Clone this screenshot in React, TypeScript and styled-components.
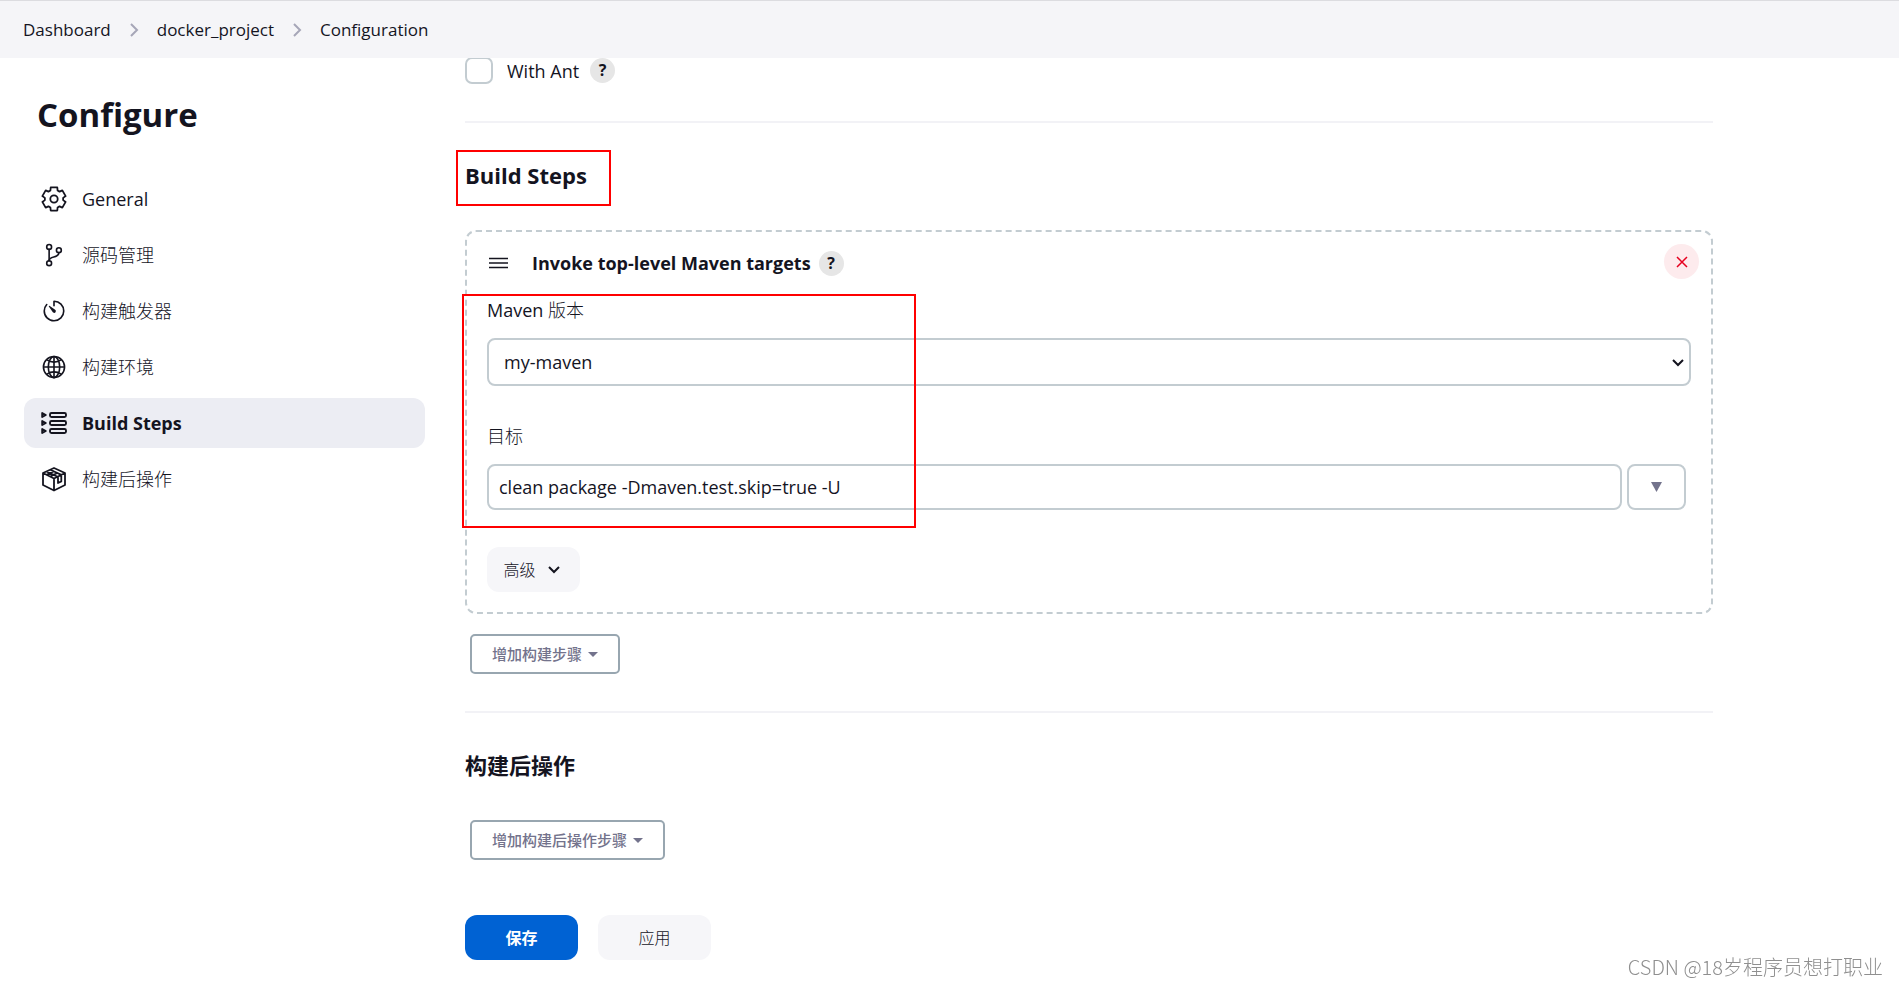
import React from "react";
import styled, { createGlobalStyle, css } from "styled-components";
import { IoGitBranchOutline, IoGlobeOutline, IoTimerOutline } from "react-icons/io5";

const ink = "#14141f";
const line = "#c3ccd1";

const GlobalStyle = createGlobalStyle`
  * { box-sizing: border-box; }
  body {
    margin: 0;
    background: #fff;
    color: ${ink};
    font-family: "Open Sans", "Noto Sans CJK SC", sans-serif;
    font-size: 18px;
    line-height: 24px;
  }
  button, input, select { font: inherit; color: inherit; margin: 0; }
  h1, h2, h3, ul, ol, p { margin: 0; padding: 0; }
  ul, ol { list-style: none; }
  a { color: inherit; text-decoration: none; }
`;

const Header = styled.header`
  position: sticky;
  top: 0;
  z-index: 2;
  height: 58px;
  padding: 0 23px;
  display: flex;
  align-items: center;
  background: #f5f5f8;
  border-top: 1px solid #dcdce0;
`;

const Crumbs = styled.ol`
  display: flex;
  align-items: center;
  gap: 19px;
  font-size: 17px;
  li { display: flex; align-items: center; gap: 18px; }
`;

const Layout = styled.div`
  display: grid;
  grid-template-columns: 401px minmax(0, 1248px);
  column-gap: 40px;
  padding: 0 24px;
`;

const Title = styled.h1`
  margin: 35px 0 37px;
  padding-left: 13px;
  font-size: 33px;
  font-weight: 700;
  line-height: 44px;
`;

const NavList = styled.ul`
  display: flex;
  flex-direction: column;
  gap: 6px;
`;

const NavLink = styled.a<{ $active?: boolean }>`
  display: flex;
  align-items: center;
  gap: 15px;
  height: 50px;
  padding: 0 17px;
  border-radius: 12px;
  svg { width: 26px; height: 26px; flex: none; }
  ${(p) => p.$active && css`background: #ecedf3; font-weight: 700;`}
`;

const Han = styled.span`
  font-weight: 300;
`;

const Main = styled.main`
  min-width: 0;
`;

const OptionRow = styled.div`
  display: flex;
  align-items: center;
  margin-top: -1px;
  height: 27px;
  label { margin: 0 11px 0 14px; }
`;

const Checkbox = styled.input`
  appearance: none;
  width: 28px;
  height: 27px;
  border: 2px solid ${line};
  border-radius: 7px;
  background: #fff;
`;

const Help = styled.button`
  width: 25px;
  height: 25px;
  padding: 0;
  border: 0;
  border-radius: 50%;
  background: #e6e6e6;
  font-size: 16px;
  font-weight: 700;
  line-height: 25px;
`;

const Divider = styled.hr`
  height: 2px;
  margin: 37px 0 38px;
  border: 0;
  background: #f2f2f6;
`;

const SectionTitle = styled.h2`
  position: relative;
  font-size: 22px;
  font-weight: 700;
  line-height: 28px;
`;

const Mark = styled.span<{ $top: number; $left: number; $width: number; $height: number }>`
  position: absolute;
  top: ${(p) => p.$top}px;
  left: ${(p) => p.$left}px;
  width: ${(p) => p.$width}px;
  height: ${(p) => p.$height}px;
  border: 2px solid #f00;
  pointer-events: none;
`;

const Card = styled.section`
  position: relative;
  margin: 41px 0 20px;
  padding: 12px 20px 20px;
  border: 2px dashed ${line};
  border-radius: 11px;
`;

const CardHead = styled.div`
  display: flex;
  align-items: center;
  height: 38px;
  margin-right: -8px;
  h3 { margin: 0 8px 0 23px; font-size: 18px; font-weight: 700; line-height: 24px; }
`;

const Handle = styled.svg`
  width: 21px;
  height: 16px;
  margin-left: 1px;
`;

const Remove = styled.button`
  display: grid;
  place-items: center;
  align-self: flex-start;
  width: 35px;
  height: 35px;
  margin-left: auto;
  padding: 0;
  border: 0;
  border-radius: 50%;
  background: #fdebed;
  color: #e6001f;
`;

const Label = styled.label`
  display: block;
  margin: 16px 0;
`;

const Field = styled.div`
  & + & { margin-top: 38px; }
`;

const SelectBox = styled.div`
  position: relative;
  svg { position: absolute; right: 7px; top: 21px; pointer-events: none; }
`;

const Select = styled.select`
  display: block;
  appearance: none;
  width: 100%;
  height: 48px;
  padding: 0 30px 0 15px;
  border: 2px solid ${line};
  border-radius: 8px;
  background: #fff;
`;

const InputRow = styled.div`
  display: flex;
  gap: 5px;
  padding-right: 5px;
`;

const TextInput = styled.input`
  flex: 1;
  min-width: 0;
  height: 46px;
  padding: 0 10px;
  border: 2px solid ${line};
  border-radius: 8px;
  background: #fff;
`;

const Expand = styled.button`
  display: grid;
  place-items: center;
  width: 59px;
  height: 46px;
  padding: 0;
  border: 2px solid ${line};
  border-radius: 8px;
  background: #fff;
`;

const Advanced = styled.div`
  display: flex;
  margin-top: 37px;
`;

const Button = styled.button<{ $primary?: boolean; $small?: boolean }>`
  display: inline-flex;
  align-items: center;
  justify-content: center;
  gap: 12px;
  min-width: ${(p) => (p.$small ? 93 : 113)}px;
  height: 45px;
  padding: ${(p) => (p.$small ? "0 20px 0 16px" : "0 16px")};
  border: 0;
  border-radius: 12px;
  font-size: 16px;
  background: ${(p) => (p.$primary ? "#0062d3" : "#f6f6f9")};
  color: ${(p) => (p.$primary ? "#fff" : ink)};
  font-weight: ${(p) => (p.$primary ? 700 : 300)};
`;

const AddButton = styled.button`
  display: flex;
  align-items: center;
  gap: 6px;
  height: 40px;
  margin-left: 5px;
  padding: 0 20px;
  border: 2px solid #98a6b0;
  border-radius: 5px;
  background: #fff;
  color: #73738c;
  font-size: 15px;
  font-weight: 500;
  ${SectionTitle} + & { margin-top: 41px; }
`;

const Actions = styled.div`
  display: flex;
  gap: 20px;
  margin-top: 55px;
`;

const Watermark = styled.p`
  position: fixed;
  right: 16px;
  bottom: 6px;
  color: #8f8f8f;
  font-family: "Noto Sans CJK SC", sans-serif;
  font-size: 20px;
  font-weight: 300;
  line-height: 28px;
`;

const toothEdges = [[-23, 9.2], [-16, 12], [16, 12], [23, 9.2]];
const gearPoints = [0, 60, 120, 180, 240, 300]
  .flatMap((turn) =>
    toothEdges.map(([offset, radius]) => {
      const angle = ((turn + offset - 90) * Math.PI) / 180;
      return `${13 + radius * Math.cos(angle)},${13 + radius * Math.sin(angle)}`;
    })
  )
  .join(" ");

const Gear = () => (
  <svg viewBox="0 0 26 26" fill="none" stroke="currentColor" strokeWidth="1.8" strokeLinejoin="round">
    <circle cx="13" cy="13" r="3.7" />
    <polygon points={gearPoints} />
  </svg>
);

const Steps = () => (
  <svg viewBox="0 0 26 26" fill="none" stroke="currentColor" strokeWidth="1.9" strokeLinejoin="round">
    {[5, 13, 21].map((y) => (
      <React.Fragment key={y}>
        <path d={`M1.2 ${y - 2}v4l3.600-2z`} />
        <rect x="9" y={y - 2} width="16" height="4" rx="1.500" />
      </React.Fragment>
    ))}
  </svg>
);

const Package = () => (
  <svg viewBox="0 0 26 26" fill="none" stroke="currentColor" strokeWidth="1.8" strokeLinejoin="round">
    <path d="M13 2l11 5v12l-11 5.500L2 19V7zM2 7l11 5.500L24 7M13 12.500v12M5.500 5.400l11 5.400M9.300 3.700l11 5.200M17 10.800v6.200l3.300-1.600V9M9.300 10.500l7-3.500M6 8.500l7-3.400" />
  </svg>
);

const Caret = () => (
  <svg width="10" height="5" viewBox="0 0 10 5" fill="currentColor"><path d="M0 0h10L5 5z" /></svg>
);

const Chevron = () => (
  <svg width="12" height="8" viewBox="0 0 12 8" fill="none" stroke="currentColor" strokeWidth="2">
    <path d="M1 1l5 5 5-5" />
  </svg>
);

const CrumbArrow = () => (
  <svg width="9" height="14" viewBox="0 0 9 14" fill="none" stroke="#a6a6b8" strokeWidth="2"><path d="M1 1l6 6-6 6" /></svg>
);

const crumbs = ["Dashboard", "docker_project", "Configuration"];

const nav = [
  { text: "General", icon: <Gear /> },
  { text: "源码管理", icon: <IoGitBranchOutline />, han: true },
  { text: "构建触发器", icon: <IoTimerOutline />, han: true },
  { text: "构建环境", icon: <IoGlobeOutline />, han: true },
  { text: "Build Steps", icon: <Steps />, active: true },
  { text: "构建后操作", icon: <Package />, han: true },
];

export default function App() {
  return (
    <>
      <GlobalStyle />
      <Header>
        <Crumbs>
          {crumbs.map((c, i) => (
            <li key={c}>{i > 0 && <CrumbArrow />}<a href="#">{c}</a></li>
          ))}
        </Crumbs>
      </Header>
      <Layout>
        <nav>
          <Title>Configure</Title>
          <NavList>
            {nav.map((n) => (
              <li key={n.text}>
                <NavLink href="#" $active={n.active}>
                  {n.icon}
                  {n.han ? <Han>{n.text}</Han> : <span>{n.text}</span>}
                </NavLink>
              </li>
            ))}
          </NavList>
        </nav>
        <Main>
          <OptionRow>
            <Checkbox type="checkbox" id="ant" />
            <label htmlFor="ant">With Ant</label>
            <Help type="button">?</Help>
          </OptionRow>
          <Divider />
          <SectionTitle>
            Build Steps
            <Mark $top={-11} $left={-9} $width={155} $height={56} />
          </SectionTitle>
          <Card>
            <CardHead>
              <Handle viewBox="0 0 21 16" stroke="currentColor" strokeWidth="1.700"><path d="M1 3.500h19M1 8h19M1 12.500h19" /></Handle>
              <h3>Invoke top-level Maven targets</h3>
              <Help type="button">?</Help>
              <Remove type="button" aria-label="Remove">
                <svg width="12" height="12" viewBox="0 0 12 12" stroke="currentColor" strokeWidth="1.500"><path d="M1 1l10 10M11 1L1 11" /></svg>
              </Remove>
            </CardHead>
            <Field>
              <Label htmlFor="version">Maven <Han>版本</Han></Label>
              <SelectBox>
                <Select id="version"><option>my-maven</option></Select>
                <Chevron />
              </SelectBox>
            </Field>
            <Field>
              <Label htmlFor="targets"><Han>目标</Han></Label>
              <InputRow>
                <TextInput id="targets" type="text" defaultValue="clean package -Dmaven.test.skip=true -U" />
                <Expand type="button" aria-label="Expand">
                  <svg width="11" height="10" viewBox="0 0 11 10" fill="#73738c"><path d="M0 0h11L5.500 10z" /></svg>
                </Expand>
              </InputRow>
            </Field>
            <Advanced>
              <Button type="button" $small>高级<Chevron /></Button>
            </Advanced>
            <Mark $top={62} $left={-5} $width={454} $height={234} />
          </Card>
          <AddButton type="button">增加构建步骤<Caret /></AddButton>
          <Divider />
          <SectionTitle>构建后操作</SectionTitle>
          <AddButton type="button">增加构建后操作步骤<Caret /></AddButton>
          <Actions>
            <Button type="submit" $primary>保存</Button>
            <Button type="button">应用</Button>
          </Actions>
        </Main>
      </Layout>
      <Watermark>CSDN @18岁程序员想打职业</Watermark>
    </>
  );
}
